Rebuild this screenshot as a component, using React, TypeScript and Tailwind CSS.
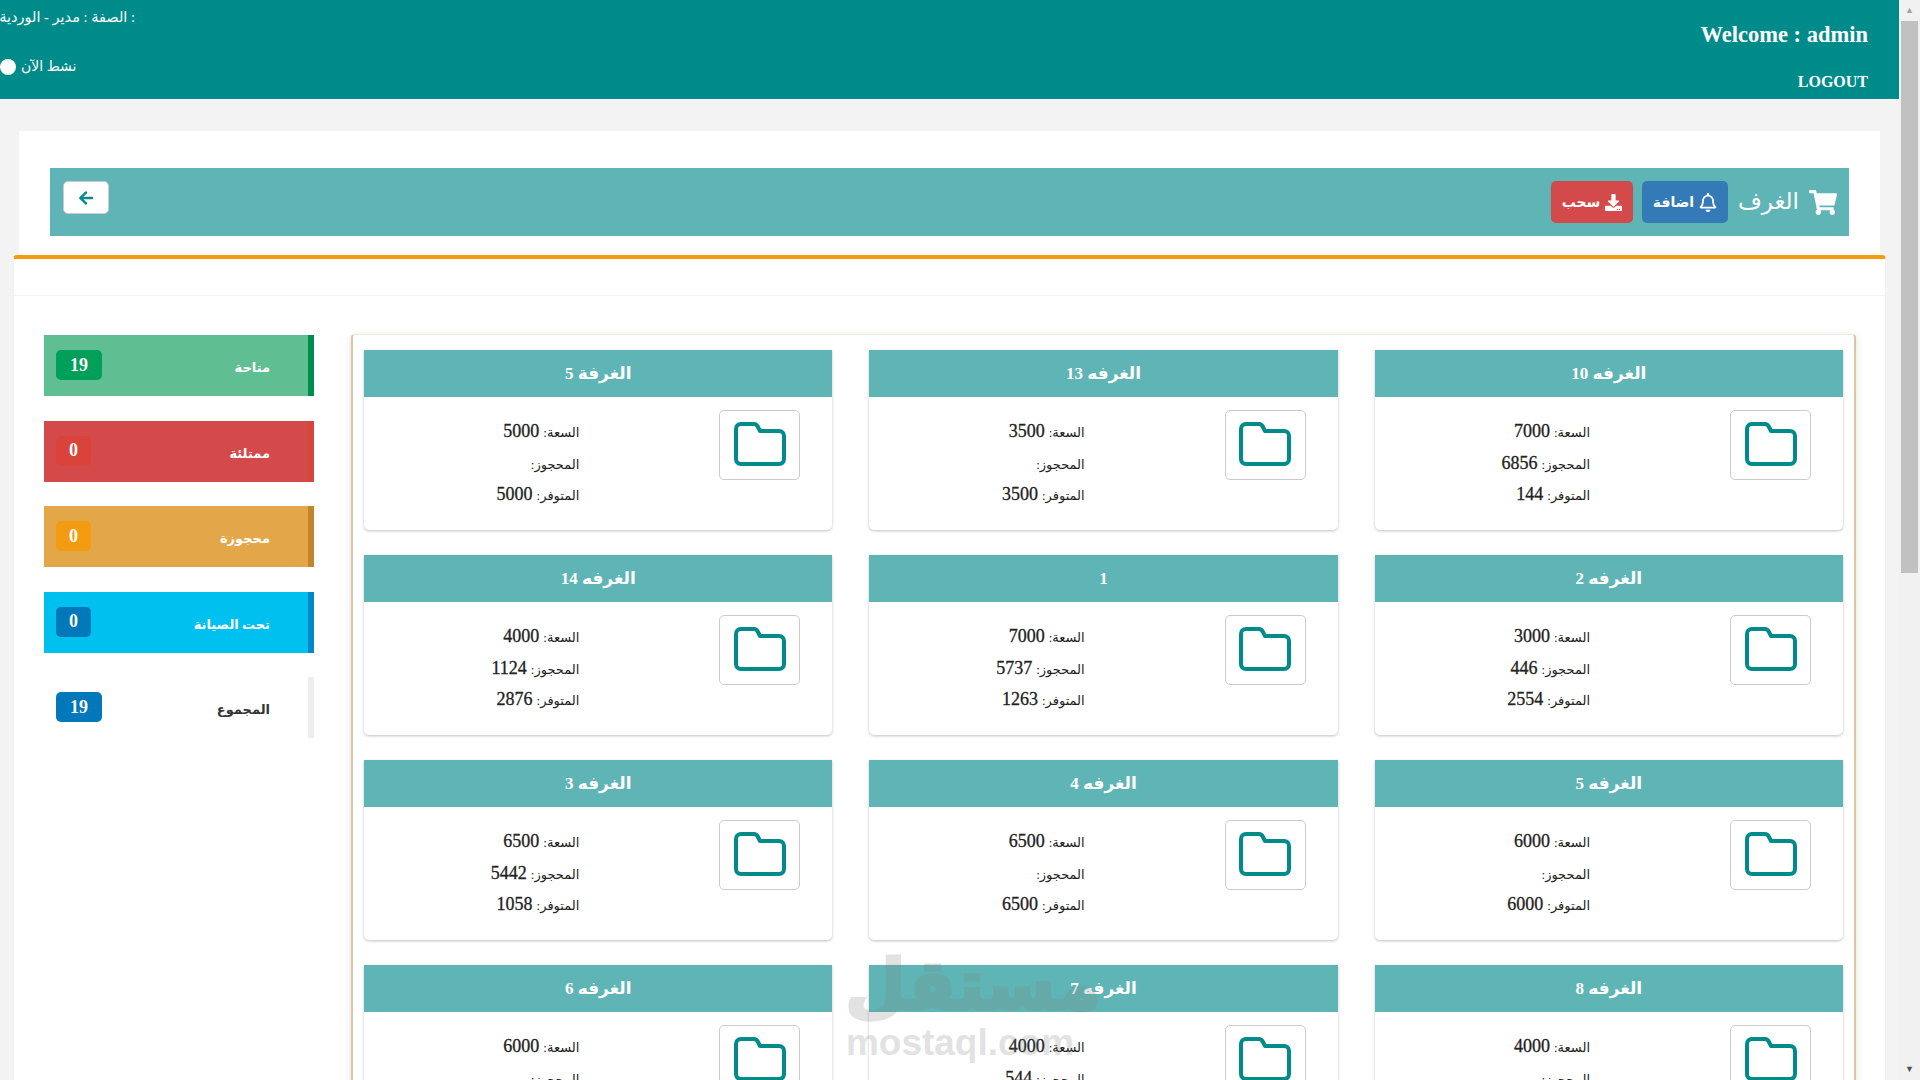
import { FaShoppingCart, FaRegBell, FaArrowLeft, FaDownload } from 'react-icons/fa';

const rooms = [
  { name: 'الغرفه 10', total: 7000, booked: 6856, free: 144 },
  { name: 'الغرفه 13', total: 3500, booked: null, free: 3500 },
  { name: 'الغرفة 5', total: 5000, booked: null, free: 5000 },
  { name: 'الغرفه 2', total: 3000, booked: 446, free: 2554 },
  { name: '1', total: 7000, booked: 5737, free: 1263 },
  { name: 'الغرفه 14', total: 4000, booked: 1124, free: 2876 },
  { name: 'الغرفه 5', total: 6000, booked: null, free: 6000 },
  { name: 'الغرفه 4', total: 6500, booked: null, free: 6500 },
  { name: 'الغرفه 3', total: 6500, booked: 5442, free: 1058 },
  { name: 'الغرفه 8', total: 4000, booked: null, free: 4000 },
  { name: 'الغرفه 7', total: 4000, booked: 544, free: 3456 },
  { name: 'الغرفه 6', total: 6000, booked: null, free: 6000 },
];

const stats = [
  { label: 'متاحة', count: 19, box: 'bg-[#5fbf92] text-white border-[#008d4c]', badge: 'bg-[#00a05a] w-[46px]' },
  { label: 'ممتلئة', count: 0, box: 'bg-[#d44a4a] text-white border-[#d6453a]', badge: 'bg-[#d9433a] w-[35px]' },
  { label: 'محجوزة', count: 0, box: 'bg-[#e3a749] text-white border-[#c5832b]', badge: 'bg-[#f39c12] w-[35px]' },
  { label: 'تحت الصيانة', count: 0, box: 'bg-[#00c0ef] text-white border-[#0088c9]', badge: 'bg-[#0078b9] w-[35px]' },
  { label: 'المجموع', count: 19, box: 'bg-white text-[#333] border-[#eeeeee]', badge: 'bg-[#0078b9] w-[46px]' },
];

function FolderIcon() {
  return (
    <svg width="52" height="44" viewBox="0 0 52 44" fill="none" stroke="#008b8b" strokeWidth="4" strokeLinejoin="round" className="-mt-[2px]">
      <path d="M7 2h13c2 0 3 1 4 3l2 4h19c3 0 5 2 5 5v23c0 3-2 5-5 5H7c-3 0-5-2-5-5V7c0-3 2-5 5-5z" />
    </svg>
  );
}

function RoomCard({ room }: { room: (typeof rooms)[number] }) {
  const line = (label: string, value: number | null) => (
    <div className="h-[31.5px] leading-[31.5px]">
      <span className="text-[13px] text-[#222]">{label}</span>{' '}
      <span className="text-[18px] [-webkit-text-stroke:0.3px_#222]">{value ?? ''}</span>
    </div>
  );
  return (
    <div className="h-[180px] bg-white rounded-b-[5px] shadow-[0_1px_3px_rgba(0,0,0,0.25)]">
      <div className="h-[47px] bg-[#5fb5b5] text-white text-[17px] font-bold flex items-center justify-center">
        {room.name}
      </div>
      <div className="flex pr-[32px] pt-[13px]">
        <div className="w-[81px] h-[70px] border border-[#ccc] rounded-[5px] flex items-center justify-center">
          <FolderIcon />
        </div>
        <div className="mr-[140px] pt-[6px] text-[#222] whitespace-nowrap">
          {line('السعة:', room.total)}
          {line('المحجوز:', room.booked)}
          {line('المتوفر:', room.free)}
        </div>
      </div>
    </div>
  );
}

export default function App() {
  return (
    <div className="h-screen overflow-hidden flex bg-[#f3f3f3] font-['Liberation_Serif','DejaVu_Sans',serif]">
      <div className="relative flex-1 min-w-0">
        <header className="h-[99px] bg-[#008b8b] text-white flex justify-between">
          <div dir="rtl" className="w-[135px] text-[14.5px]">
            <div className="h-[36px] flex items-center whitespace-nowrap">: الصفة : مدير - الوردية</div>
            <div className="mt-[20px] flex items-center justify-end gap-[5px] whitespace-nowrap">
              <span className="text-[14px]">نشط الآن</span>
              <span className="w-[16px] h-[16px] rounded-full bg-white" />
            </div>
          </div>
          <div className="pr-[31px] pt-[20px] text-right font-bold">
            <div className="text-[22.5px] leading-[30px]">Welcome : admin</div>
            <div className="mt-[22px] text-[16px] leading-[20px]">LOGOUT</div>
          </div>
        </header>

        <div className="mt-[32px] mx-[19px] bg-white h-[125px] px-[31px] pt-[37px]">
          <div dir="rtl" className="h-[68px] bg-[#5fb5b5] flex items-start pt-[13px] pr-[12px] pl-[13px]">
            <div className="flex items-center text-white text-[23px] h-[42px] gap-[10px]">
              <FaShoppingCart className="w-[28px] h-[25px]" />
              <span>الغرف</span>
            </div>
            <button className="mr-[10px] w-[86px] h-[42px] bg-[#337ab7] rounded-[5px] text-white text-[14px] font-bold flex items-center justify-center gap-[5px]">
              <FaRegBell className="w-[18px] h-[19px]" />
              اضافة
            </button>
            <button className="mr-[9px] w-[82px] h-[42px] bg-[#d44a4a] rounded-[5px] text-white text-[14px] font-bold flex items-center justify-center gap-[5px]">
              <FaDownload className="w-[17px] h-[17px]" />
              سحب
            </button>
            <button className="mr-auto w-[46px] h-[33px] bg-white rounded-[5px] border border-[#ccc] flex items-center justify-center text-[#008b8b]">
              <FaArrowLeft className="w-[16px] h-[16px]" />
            </button>
          </div>
        </div>

        <div className="mx-[13px] -mt-[1px] bg-white border-x border-dotted border-[#e5e5e5] border-t-[4px] [border-top-style:solid] border-t-[#f39c12] rounded-t-[4px] h-[840px]">
          <div className="h-[37px] border-b border-[#f4f4f4]" />
          <div className="flex pt-[39px] pl-[30px]">
            <div className="w-[270px] flex flex-col gap-[24.5px]">
              {stats.map(s => (
                <div key={s.label} className={`h-[61px] border-r-[6px] flex items-start justify-between pl-[12px] pr-[38px] pt-[15px] ${s.box}`}>
                  <span className={`h-[30px] rounded-[5px] text-white text-[18px] font-bold flex items-center justify-center ${s.badge}`}>
                    {s.count}
                  </span>
                  <span className="text-[13px] font-bold leading-[36px]">{s.label}</span>
                </div>
              ))}
            </div>
            <div
              dir="rtl"
              className="ml-[37px] w-[1505px] px-[11px] pb-[13px] pt-[15px] -mt-[1px] bg-white border-x-2 border-[#dcc5a0] border-t border-t-[#f5eadb] rounded-[4px] shadow-[0_2px_8px_rgba(0,0,0,0.12)] grid grid-cols-3 gap-x-[37px] gap-y-[25px]"
            >
              {rooms.map(r => (
                <RoomCard key={r.name + r.total} room={r} />
              ))}
            </div>
          </div>
        </div>

        <div className="absolute left-[845px] top-[945px] w-[230px] text-center text-[#808080] opacity-[0.22] font-['Liberation_Sans','DejaVu_Sans',sans-serif] font-bold pointer-events-none">
          <div className="text-[70px] leading-[80px] [-webkit-text-stroke:3px_#808080]">مستقل</div>
          <div className="text-[37px] leading-[36px]">mostaql.com</div>
        </div>
      </div>

      <div className="w-[21px] bg-[#f1f1f1] flex flex-col items-center">
        <div className="h-[21px] flex items-center justify-center text-[#a3a3a3] text-[9px]">▲</div>
        <div className="w-[17px] h-[552px] bg-[#c1c1c1]" />
        <div className="mt-auto h-[21px] flex items-center justify-center text-[#505050] text-[9px]">▼</div>
      </div>
    </div>
  );
}
